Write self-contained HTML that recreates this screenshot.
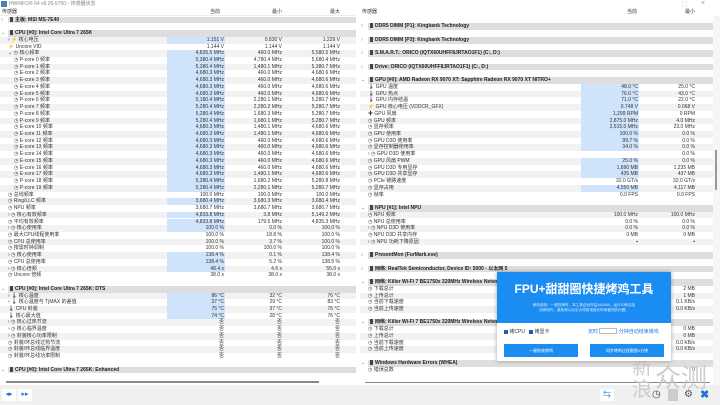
<!DOCTYPE html>
<html><head><meta charset="utf-8"><style>
*{margin:0;padding:0;box-sizing:border-box}
body{width:720px;height:405px;overflow:hidden;background:#fff;font-family:"Liberation Sans","Noto Sans CJK SC",sans-serif;font-size:5px;color:#333;position:relative}
.a{position:absolute;white-space:nowrap}
.r{position:absolute;height:6.73px;line-height:6.73px;white-space:nowrap}
.h{background:#dedede;font-weight:bold;color:#222}
.alt{background:#f2f2f2}
.v{position:absolute;text-align:right;width:60px}
.ic{display:inline-block;width:3px;height:5px;background:#444;vertical-align:-1px;margin-right:2px}
</style></head><body>
<div class="a" style="left:0;top:0;width:720px;height:9px;background:#fff;color:#888;line-height:9px;padding-left:9px">HWiNFO® 64 v8.26-5750 - 传感器状态</div>
<div class="a" style="left:1px;top:1px;width:6px;height:6px;background:#4a7fb5"></div>
<div class="a" style="left:682px;top:1px;color:#999">▢</div><div class="a" style="left:701px;top:0;color:#999;font-size:7px">×</div>
<div class="a" style="left:0;top:9px;width:356px;height:7px;line-height:7px;padding-left:2px;border-bottom:1px solid #eee">传感器</div>
<div class="a" style="left:210px;top:9px;line-height:7px">当前</div><div class="a" style="left:272px;top:9px;line-height:7px">最小</div><div class="a" style="left:330px;top:9px;line-height:7px">最大</div>
<div class="a" style="left:360px;top:9px;width:353px;height:7px;line-height:7px;padding-left:2px">传感器</div>
<div class="a" style="left:627px;top:9px;line-height:7px">当前</div><div class="a" style="left:685px;top:9px;line-height:7px">最小</div>
<div id="L"></div><div id="R"></div>
<div class="a" style="left:713px;top:16px;width:7px;height:370px;background:#f6f6f6"></div>
<div class="a" style="left:715px;top:150px;width:2px;height:40px;background:#999"></div>
<div class="a" style="left:6px;top:381px;width:313px;height:1.5px;background:#888"></div>
<div class="a" style="left:365px;top:382px;width:345px;height:1px;background:#888"></div>
<div class="a" style="left:0;top:385px;width:720px;height:20px;background:#f0f0f0"></div>
<div class="a" style="left:2px;top:389px;width:14px;height:12px;background:#fff;color:#1a7ad6;font-size:7px;text-align:center;line-height:12px">◂▸</div>
<div class="a" style="left:18px;top:389px;width:14px;height:12px;background:#fff;color:#1a7ad6;font-size:7px;text-align:center;line-height:12px">▸▸</div>
<div class="a" style="left:600px;top:389px;width:14px;height:12px;background:#fff;color:#1a7ad6;font-size:8px;text-align:center">⇆</div>
<div class="a" style="left:652px;top:389px;font-size:10px;color:#444">◷</div>
<div class="a" style="left:668px;top:389px;width:10px;height:12px;background:#ccc"></div>
<div class="a" style="left:684px;top:389px;font-size:10px;color:#555">⚙</div>
<div class="a" style="left:700px;top:388px;font-size:11px;color:#1a7ad6;font-weight:bold">✖</div>
<div class="a" style="left:632px;top:355px;font-size:20px;color:rgba(200,200,200,.9);font-family:'Noto Sans CJK SC',sans-serif;line-height:22px;width:25px;white-space:normal">新浪</div>
<div class="a" style="left:655px;top:358px;font-size:26px;color:rgba(200,200,200,.9);font-family:'Noto Sans CJK SC',sans-serif">众测</div>
<div class="a" style="left:497px;top:272px;width:174px;height:89px;background:#fff;box-shadow:0 0 4px rgba(0,0,0,.35)">
 <div style="height:51px;background:#1a8cf2;color:#fff;text-align:center">
  <div style="font-size:12px;font-weight:bold;padding-top:10px;line-height:14px">FPU+甜甜圈快捷烤鸡工具</div>
  <div style="font-size:3.6px;line-height:5px;margin-top:7px;opacity:.85">使用说明：一键双烤时，本工具自动开启AIDA64，运行10秒后自<br>动停用内，避免和以后引大导致电脑长时间被死的问题。</div>
 </div>
 <div style="position:absolute;left:7px;top:56px;font-size:5px;color:#333;line-height:8px"><span style="display:inline-block;width:4px;height:4px;background:#1a5fb4;vertical-align:-0.5px"></span> 烤CPU &nbsp;&nbsp;<span style="display:inline-block;width:4px;height:4px;background:#1a5fb4;vertical-align:-0.5px"></span> 烤显卡</div>
 <div style="position:absolute;left:91px;top:56px;font-size:5px;color:#1a7ad6;line-height:8px">定时 <span style="display:inline-block;width:18px;height:6px;border:1px solid #bbb;vertical-align:-1px"></span> 分钟自动结束烤鸡</div>
 <div style="position:absolute;left:7px;top:72px;width:74px;height:13px;background:#1a8cf2;color:#fff;text-align:center;line-height:13px;font-size:4px">一键结束烤鸡</div>
 <div style="position:absolute;left:93px;top:72px;width:74px;height:13px;background:#1a8cf2;color:#fff;text-align:center;line-height:13px;font-size:4px">同步烤鸡过程截图1分钟</div>
</div>
<script>
const P=6.73,T0=16.6;
function mk(id,x0,w,cols,rows,blue){let h='';rows.forEach((r,i)=>{const y=T0+i*P;if(r===0)return;
 if(r[0]==='H'){h+=`<div class="r h" style="left:${x0+8}px;top:${y}px;width:${w-8}px;padding-left:2px"><span class="ic"></span>${r[1]}</div><div class="r" style="left:${x0+1}px;top:${y}px;color:#777">${r[2]||'›'}</div>`;return;}
 const bg=(i%2)?'alt':'';
 h+=`<div class="r ${bg}" style="left:${x0}px;top:${y}px;width:${w}px"></div>`;
 if(r[4])h+=`<div class="r" style="left:${blue}px;top:${y}px;width:58px;background:#cfe3fb"></div>`;
 h+=`<div class="r" style="left:${x0+r[0]}px;top:${y}px">${r[1]}</div>`;
 r[2].forEach((v,k)=>{h+=`<div class="r v" style="left:${cols[k]-60}px;top:${y}px">${v}</div>`});});
 document.getElementById(id).innerHTML=h;}
const L=[['H','主板: MSI MS-7E40','›'],0,['H','CPU [#0]: Intel Core Ultra 7 265K','⌄']];
const f=(n,c,v,mn,mx,b=1)=>[n,c,[v,mn,mx],0,b];
L.push(f(8,'› ⚡ 核心电压','1.151 V','0.830 V','1.229 V'),f(8,'⚡ Uncore VID','1.144 V','1.144 V','1.144 V',0),f(8,'⌄ ◷ 核心频率','4,835.5 MHz','460.0 MHz','5,580.5 MHz'));
const cores=[['P',0,'5,380.4','4,780.4','5,680.4'],['P',1,'5,380.4','1,480.1','5,380.7'],['E',2,'4,680.3','460.0','4,680.6'],['E',3,'4,680.3','460.0','4,680.6'],['E',4,'4,680.3','460.0','4,680.6'],['E',5,'4,680.3','460.0','4,680.6'],['P',6,'5,180.4','2,280.1','5,280.7'],['P',7,'5,280.4','2,280.2','5,280.7'],['P',8,'5,280.4','1,680.3','5,280.7'],['P',9,'5,280.4','1,680.1','5,280.7']];
for(let i=10;i<18;i++)cores.push(['E',i,'4,680.3',i<12||i==17?'1,480.1':'460.0','4,680.6']);
cores.push(['P',18,'5,280.4','1,680.2','5,280.8'],['P',19,'5,280.4','2,280.1','5,280.7']);
cores.forEach(c=>L.push(f(14,`◷ ${c[0]}-core ${c[1]} 频率`,c[2]+' MHz',c[3]+' MHz',c[4]+' MHz')));
L.push(f(8,'◷ 总线频率','100.0 MHz','100.0 MHz','100.0 MHz',0),f(8,'◷ Ring/LLC 频率','3,680.4 MHz','3,680.3 MHz','3,680.4 MHz'),f(8,'◷ NPU 频率','3,680.7 MHz','3,680.7 MHz','3,680.7 MHz',0),
f(8,'› ◷ 核心有效频率','4,833.8 MHz','3.8 MHz','5,149.2 MHz'),f(8,'◷ 平均有效频率','4,833.8 MHz','179.5 MHz','4,835.3 MHz'),f(8,'› ◷ 核心使用率','100.0 %','0.0 %','100.0 %'),
f(8,'◷ 最大CPU线程使用率','100.0 %','18.8 %','100.0 %',0),f(8,'◷ CPU 总使用率','100.0 %','3.7 %','100.0 %',0),f(8,'◷ 按需时钟调制','100.0 %','100.0 %','100.0 %',0),
f(8,'› ◷ 核心使用率','138.4 %','0.1 %','138.4 %'),f(8,'◷ CPU 总使用率','138.4 %','5.2 %','138.5 %'),f(8,'› ◷ 核心倍频','48.4 x','4.6 x','55.0 x'),f(8,'◷ Uncore 倍频','38.0 x','38.0 x','38.0 x',0),0,
['H','CPU [#0]: Intel Core Ultra 7 265K: DTS','⌄'],f(8,'› 🌡 核心温度','86 °C','32 °C','76 °C'),f(8,'› 🌡 核心温度与 TjMAX 的差值','37 °C','29 °C','83 °C'),f(8,'🌡 CPU 封装','75 °C','37 °C','76 °C'),f(8,'🌡 核心最大值','74 °C','28 °C','76 °C'),
f(8,'› ◷ 核心过热节流','否','否','否',0),f(8,'› ◷ 核心临界温度','否','否','否',0),f(8,'› ◷ 封装核心功率限制','否','否','否',0),f(8,'◷ 封装/环总线过热节流','否','否','否',0),f(8,'◷ 封装/环总线临界温度','否','否','否',0),f(8,'◷ 封装/环总线功率限制','否','否','否',0),0,['H','CPU [#0]: Intel Core Ultra 7 265K: Enhanced','⌄']);
mk('L',0,356,[224,282,340],L,167);
const g=(n,c,v,mn,b=1)=>[n,c,[v,mn],0,b];
const R=[0,['H','DDR5 DIMM [P1]: Kingbank Technology'],0,['H','DDR5 DIMM [P3]: Kingbank Technology'],0,['H','S.M.A.R.T.: ORICO (IQTX60UHFF8JRTAO1F1) (C:, D:)'],0,['H','Drive: ORICO (IQTX60UHFF8JRTAO1F1) (C:, D:)'],0,['H','GPU [#0]: AMD Radeon RX 9070 XT: Sapphire Radeon RX 9070 XT NITRO+','⌄'],
g(8,'🌡 GPU 温度','48.0 °C','25.0 °C'),g(8,'🌡 GPU 热点','76.0 °C','43.0 °C'),g(8,'🌡 GPU 内存结温','71.0 °C','22.0 °C'),g(8,'⚡ GPU 核心电压 (VDDCR_GFX)','0.748 V','0.068 V'),g(8,'✚ GPU 风扇','1,299 RPM','0 RPM'),
g(8,'◷ GPU 频率','2,875.0 MHz','4.0 MHz'),g(8,'◷ 显存频率','2,515.0 MHz','23.0 MHz'),g(8,'◷ GPU 使用率','100.0 %','0.0 %'),g(8,'◷ GPU D3D 使用率','99.7 %','0.0 %'),g(8,'◷ 显存控制器使用率','34.0 %','0.0 %'),
g(8,'› ◷ GPU D3D 使用率','','0.0 %',0),g(8,'◷ GPU 风扇 PWM','25.0 %','0.0 %'),g(8,'◷ GPU D3D 专用显存','1,690 MB','1,235 MB'),g(8,'◷ GPU D3D 共享显存','435 MB','437 MB'),g(8,'◷ PCIe 链路速度','32.0 GT/s','32.0 GT/s',0),g(8,'◷ 显存占用','4,550 MB','4,117 MB'),g(8,'◷ 帧率','0.0 FPS','0.0 FPS',0),0,
['H','NPU [#1]: Intel NPU','⌄'],g(8,'◷ NPU 频率','100.0 MHz','100.0 MHz',0),g(8,'◷ NPU 总使用率','0.0 %','0.0 %',0),g(8,'› ◷ NPU D3D 使用率','0.0 %','0.0 %',0),g(8,'◷ NPU D3D 共享内存','0 MB','0 MB',0),g(8,'› ◷ NPU 功耗下降原因','▪','▪',0),0,
['H','PresentMon (FurMark.exe)'],0,['H','网络: RealTek Semiconductor, Device ID: 5000 - 以太网 5'],0,['H','网络: Killer Wi-Fi 7 BE1750x 320MHz Wireless Network Adapter','⌄'],
g(8,'◷ 下载总计','','2 MB',0),g(8,'◷ 上传总计','','1 MB',0),g(8,'◷ 当前下载速度','','0.1 KB/s',0),g(8,'◷ 当前上传速度','','0.0 KB/s',0),0,
['H','网络: Killer Wi-Fi 7 BE1750x 320MHz Wireless Network Adapter','⌄'],g(8,'◷ 下载总计','','0 MB',0),g(8,'◷ 上传总计','','0 MB',0),g(8,'◷ 当前下载速度','','0.0 KB/s',0),g(8,'◷ 当前上传速度','','0.0 KB/s',0),0,
['H','Windows Hardware Errors (WHEA)','⌄'],g(8,'◷ 错误总数','','0',0)];
mk('R',360,353,[638,695],R,581);
</script>
</body></html>
